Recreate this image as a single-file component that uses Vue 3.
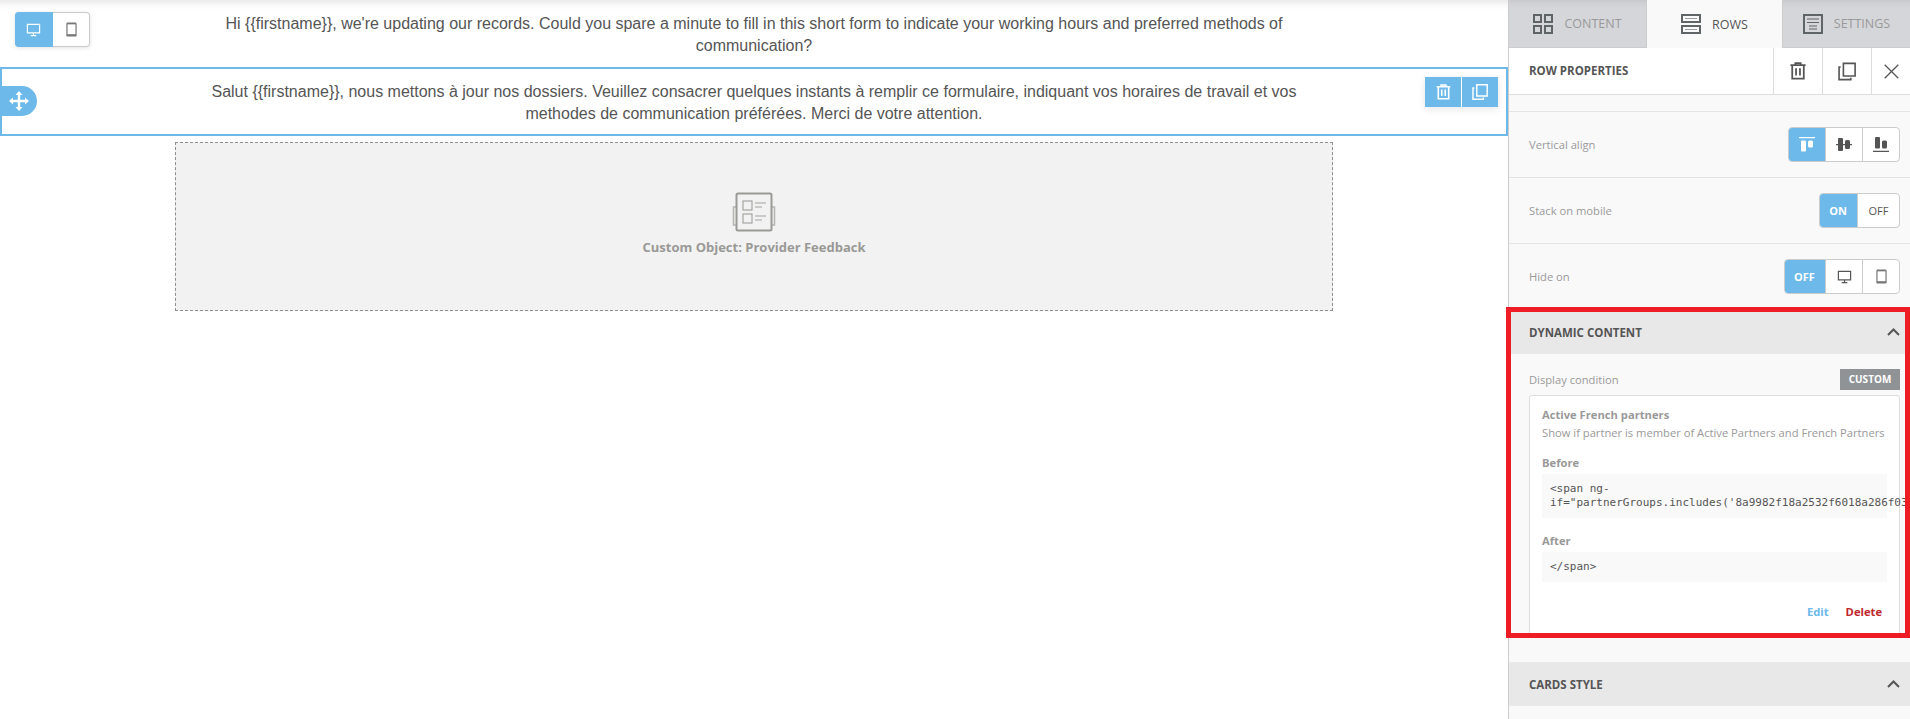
<script setup>
const tag = '{' + '{firstname}' + '}'
const codeBefore = `<span ng-if="partnerGroups.includes('8a9982f18a2532f6018a286f03`
</script>

<template>
  <div class="page">
    <svg class="defs" aria-hidden="true">
      <symbol id="desktop" viewBox="0 0 16 16">
        <path d="M1.5 2.5h13v9h-13zM8 11.5v2.5M5 14.5h6" fill="none" stroke="currentColor" stroke-width="1.3"/>
      </symbol>
      <symbol id="phone" viewBox="0 0 16 16">
        <rect x="2.500" y="0.500" width="11" height="15" rx="1.500" fill="currentColor"/>
        <rect x="3.800" y="2.500" width="8.400" height="10.500" fill="#fff"/>
      </symbol>
      <symbol id="trash" viewBox="0 0 18 20">
        <path d="M0.5 3.5h17M6 3V1.2h6V3M2.5 3.5v15h13v-15M6.8 7v8M11.2 7v8" fill="none" stroke="currentColor" stroke-width="2"/>
      </symbol>
      <symbol id="copy" viewBox="0 0 20 20">
        <path d="M6 1h13v14H6zM3 5H1.200v14h13v-2" fill="none" stroke="currentColor" stroke-width="1.800"/>
      </symbol>
    </svg>

    <main class="canvas">
      <div class="device-toggle">
        <button class="device active"><svg class="ico15"><use href="#desktop"/></svg></button>
        <button class="device"><svg class="ico15"><use href="#phone"/></svg></button>
      </div>

      <section class="text-row first">
        <p>Hi {{ tag }}, we're updating our records. Could you spare a minute to fill in this short form to indicate your working hours and preferred methods of communication?</p>
      </section>

      <section class="text-row selected">
        <div class="move-handle">
          <svg width="20" height="20" viewBox="0 0 20 20"><path d="M10 0l3.500 4h-2.300v4.800H16V6.500l4 3.500-4 3.500v-2.300h-4.800V16h2.300L10 20l-3.500-4h2.300v-4.800H4v2.300L0 10l4-3.500v2.300h4.800V4H6.500z" fill="#fff"/></svg>
        </div>
        <p>Salut {{ tag }}, nous mettons à jour nos dossiers. Veuillez consacrer quelques instants à remplir ce formulaire, indiquant vos horaires de travail et vos methodes de communication préférées. Merci de votre attention.</p>
        <div class="row-tools">
          <span class="tool"><svg width="15" height="16"><use href="#trash"/></svg></span>
          <span class="tool"><svg width="16" height="16"><use href="#copy"/></svg></span>
        </div>
      </section>

      <section class="placeholder">
        <svg width="44" height="40" viewBox="0 0 44 40" fill="none">
          <path d="M4 15H1.500v18H4M40 15h2.500v18H40" stroke="#b5b5b2" stroke-width="1.500"/>
          <rect x="4.500" y="1.500" width="35" height="37" rx="1.500" stroke="#999996" stroke-width="2"/>
          <rect x="11" y="9" width="9" height="9" stroke="#a5a5a2" stroke-width="1.200"/>
          <rect x="11" y="22" width="9" height="9" stroke="#a5a5a2" stroke-width="1.200"/>
          <path d="M23 11h11M23 15h7M23 24h11M23 28h7" stroke="#bdbdba" stroke-width="1.400"/>
        </svg>
        <span class="placeholder-label">Custom Object: Provider Feedback</span>
      </section>
    </main>

    <aside class="sidebar">
      <nav class="tabs">
        <div class="tab">
          <svg width="20" height="20" viewBox="0 0 20 20" fill="none" stroke="#5f6467" stroke-width="2"><rect x="1" y="1" width="7" height="7"/><rect x="12" y="1" width="7" height="7"/><rect x="1" y="12" width="7" height="7"/><rect x="12" y="12" width="7" height="7"/></svg>
          <span>CONTENT</span>
        </div>
        <div class="tab current">
          <svg width="20" height="20" viewBox="0 0 20 20" fill="none" stroke="#5f6467" stroke-width="2"><rect x="1" y="1" width="18" height="7"/><rect x="1" y="12" width="18" height="7"/><path d="M4 4.500h12M4 15.500h12" stroke-width="1" stroke="#9a9ea0"/></svg>
          <span>ROWS</span>
        </div>
        <div class="tab">
          <svg width="20" height="20" viewBox="0 0 20 20" fill="none" stroke="#5f6467"><rect x="1" y="1" width="18" height="18" stroke-width="2"/><path d="M4 5h12M4 8.500h12M6 12h8M6 15h8" stroke-width="1.200"/></svg>
          <span>SETTINGS</span>
        </div>
      </nav>

      <header class="props-head">
        <h2>ROW PROPERTIES</h2>
        <button class="head-btn"><svg width="16" height="18"><use href="#trash"/></svg></button>
        <button class="head-btn"><svg width="18" height="19"><use href="#copy"/></svg></button>
        <button class="head-btn last"><svg width="15" height="15" viewBox="0 0 15 15"><path d="M.7.700l13.600 13.600M14.300.700L.7 14.300" stroke="currentColor" stroke-width="1.300"/></svg></button>
      </header>
      <div class="band"></div>

      <div class="prop">
        <label>Vertical align</label>
        <div class="seg">
          <span class="cell on w37"><svg width="16" height="15" viewBox="0 0 16 15" fill="#fff"><path d="M0 0h16v1.200H0z"/><rect x="2" y="3.500" width="5" height="11" rx="1"/><rect x="9" y="3.500" width="5" height="7" rx="1.500"/></svg></span>
          <span class="cell w37"><svg width="16" height="15" viewBox="0 0 16 15" fill="#555"><path d="M0 7h16v1.200H0z"/><rect x="2" y="1" width="5" height="13" rx="1"/><rect x="9" y="3" width="5" height="9" rx="1.500"/></svg></span>
          <span class="cell w37"><svg width="16" height="15" viewBox="0 0 16 15" fill="#555"><path d="M0 13.800h16V15H0z"/><rect x="2" y="0" width="5" height="11.500" rx="1"/><rect x="9" y="3.500" width="5" height="8" rx="1.500"/></svg></span>
        </div>
      </div>

      <div class="prop">
        <label>Stack on mobile</label>
        <div class="seg">
          <span class="cell on w38">ON</span>
          <span class="cell w42">OFF</span>
        </div>
      </div>

      <div class="prop">
        <label>Hide on</label>
        <div class="seg">
          <span class="cell on w41">OFF</span>
          <span class="cell w37"><svg class="ico15 dark"><use href="#desktop"/></svg></span>
          <span class="cell w37"><svg class="ico15 grey"><use href="#phone"/></svg></span>
        </div>
      </div>

      <div class="section-head">
        <h3>DYNAMIC CONTENT</h3>
        <svg width="13" height="8" viewBox="0 0 13 8"><path d="M1 7l5.500-5.500L12 7" fill="none" stroke="#555" stroke-width="2"/></svg>
      </div>

      <div class="dynamic">
        <div class="cond-head">
          <span>Display condition</span>
          <span class="badge">CUSTOM</span>
        </div>
        <div class="card">
          <div class="card-title">Active French partners</div>
          <div class="card-desc">Show if partner is member of Active Partners and French Partners</div>
          <div class="code-label before">Before</div>
          <div class="code code-long">{{ codeBefore }}</div>
          <div class="code-label after">After</div>
          <div class="code code-short">&lt;/span&gt;</div>
          <div class="card-actions">
            <a class="edit">Edit</a>
            <a class="delete">Delete</a>
          </div>
        </div>
      </div>

      <div class="section-head">
        <h3>CARDS STYLE</h3>
        <svg width="13" height="8" viewBox="0 0 13 8"><path d="M1 7l5.500-5.500L12 7" fill="none" stroke="#555" stroke-width="2"/></svg>
      </div>
    </aside>

    <div class="annotation"></div>
  </div>
</template>

<style>
html, body { margin: 0; overflow: hidden; background: #fff; }
</style>

<style scoped>
.page {
  position: relative;
  display: flex;
  width: 1910px;
  height: 719px;
  overflow: hidden;
  font-family: "Open Sans", "Noto Sans", sans-serif;
  background: #fff;
}
.defs { position: absolute; width: 0; height: 0; }
.ico15 { width: 15px; height: 15px; }
.dark { color: #555; }
.grey { color: #777; }

/* canvas */
.canvas {
  position: relative;
  flex: 0 0 1508px;
  box-shadow: inset 0 10px 8px -8px rgba(0, 0, 0, .12);
  font-family: "Liberation Sans", Arial, sans-serif;
  color: #555;
}
.device-toggle {
  position: absolute;
  left: 15px;
  top: 12px;
  display: flex;
  height: 35px;
  width: 75px;
  border-radius: 4px;
  overflow: hidden;
  box-shadow: 0 0 0 1px #ccc inset, 0 1px 4px rgba(0,0,0,.12);
  background: #fff;
}
.device {
  flex: 1;
  border: 0;
  padding: 0;
  background: transparent;
  display: flex;
  align-items: center;
  justify-content: center;
  color: #777;
}
.device.active { background: #6cb9ea; color: #fff; }
.text-row { position: relative; box-sizing: border-box; }
.text-row p {
  width: 1090px;
  margin: 0 auto;
  text-align: center;
  font-size: 16px;
  line-height: 22px;
}
.first { height: 67px; padding-top: 13px; }
.selected {
  height: 69px;
  padding-top: 12px;
  border: 2px solid #6cb9ea;
}
.move-handle {
  position: absolute;
  left: -2px;
  top: 17px;
  width: 37px;
  height: 30px;
  padding-left: 9px;
  box-sizing: border-box;
  display: flex;
  align-items: center;
  background: #6cb9ea;
  border-radius: 0 15px 15px 0;
}
.row-tools {
  position: absolute;
  right: 8px;
  top: 8px;
  display: flex;
  gap: 1px;
  box-shadow: 0 2px 8px rgba(0,0,0,.1);
}
.tool {
  width: 36px;
  height: 30px;
  background: #6cb9ea;
  color: #fff;
  display: flex;
  align-items: center;
  justify-content: center;
}
.placeholder {
  width: 1158px;
  height: 169px;
  margin: 6px 0 0 175px;
  box-sizing: border-box;
  border: 1px dashed #8f8f8f;
  background: #f2f2f2;
  display: flex;
  flex-direction: column;
  align-items: center;
  padding-top: 49px;
}
.placeholder-label {
  margin-top: 6px;
  font: 700 13px "Open Sans", sans-serif;
  color: #999996;
}

/* sidebar */
.sidebar {
  flex: 1;
  min-width: 0;
  box-sizing: border-box;
  border-left: 1px solid #ccc;
  background: #f9f9f9;
  overflow: hidden;
  color: #555;
}
.tabs {
  display: flex;
  height: 48px;
  box-sizing: border-box;
  background: #d5d6da;
  border-bottom: 1px solid #ccc;
  box-shadow: inset 0 8px 8px -8px rgba(0,0,0,.12);
}
.tab {
  flex: 1;
  display: flex;
  align-items: center;
  justify-content: center;
  gap: 11px;
  font-size: 12.500px;
  color: #999;
}
.tab:nth-child(1) { flex: 0 0 137px; }
.tab:nth-child(2) { flex: 0 0 137px; }
.tab.current {
  background: #f9f9f9;
  color: #555;
  box-sizing: border-box;
  border-left: 1px solid #ccc;
  border-right: 1px solid #ccc;
  height: 48px;
}
.props-head {
  display: flex;
  align-items: stretch;
  height: 47px;
  box-sizing: border-box;
  background: #fff;
  border-bottom: 1px solid #ddd;
}
.props-head h2 {
  flex: 1;
  margin: 0;
  padding-left: 20px;
  font-size: 11.500px;
  font-weight: 700;
  line-height: 46px;
  color: #555;
}
.head-btn {
  flex: 0 0 49px;
  border: 0;
  border-left: 1px solid #ddd;
  background: transparent;
  padding: 0;
  color: #555;
  display: flex;
  align-items: center;
  justify-content: center;
}
.head-btn.last { flex-basis: 39px; }
.band { height: 17px; box-sizing: border-box; border-bottom: 1px solid #e4e4e4; }
.prop {
  height: 66px;
  box-sizing: border-box;
  padding: 0 10px 0 20px;
  display: flex;
  align-items: center;
  justify-content: space-between;
  border-bottom: 1px solid #e4e4e8;
}
.prop label { font-size: 11.200px; color: #999; }
.seg {
  display: flex;
  height: 35px;
  box-sizing: border-box;
  border-radius: 4px;
  overflow: hidden;
  background: #fff;
  border: 1px solid #ccc;
}
.cell {
  display: flex;
  align-items: center;
  justify-content: center;
  font-size: 11px;
  color: #555;
  box-sizing: border-box;
  border-left: 1px solid #ccc;
}
.cell:first-child { border-left: 0; }
.cell.on {
  background: #6cb9ea;
  color: #fff;
  font-weight: 700;
  margin: -1px 0 -1px -1px;
}
.w37 { width: 37px; }
.w38 { width: 38px; }
.w41 { width: 41px; }
.w42 { width: 42px; }
.section-head {
  height: 44px;
  padding: 0 10px 0 20px;
  box-sizing: border-box;
  display: flex;
  align-items: center;
  justify-content: space-between;
  background: #e8e8e8;
}
.section-head svg { margin-top: -1px; }
.section-head h3 { margin: 0; font-size: 11.500px; font-weight: 700; color: #555; }
.dynamic { height: 308px; box-sizing: border-box; padding: 15px 10px 0 20px; overflow: hidden; }
.cond-head {
  display: flex;
  justify-content: space-between;
  align-items: center;
  height: 21px;
  font-size: 11.200px;
  color: #999;
}
.badge {
  width: 60px;
  height: 21px;
  line-height: 21px;
  text-align: center;
  background: #8f9396;
  color: #fff;
  font-size: 10px;
  font-weight: 700;
}
.card {
  box-sizing: border-box;
  margin-top: 5px;
  height: 243px;
  padding: 10px 12px 0;
  background: #fff;
  border: 1px solid #ddd;
  border-radius: 3px;
  font-size: 11.200px;
  color: #999;
}
.card-title { font-weight: 700; line-height: 18px; }
.card-desc { line-height: 18px; white-space: nowrap; }
.code-label { font-weight: 700; line-height: 16px; }
.code-label.before { margin-top: 13px; }
.code-label.after { margin-top: 15px; }
.code {
  margin-top: 3px;
  box-sizing: border-box;
  width: 345px;
  background: #f9f9f9;
  font: 11px/14px "DejaVu Sans Mono", monospace;
  color: #555;
  white-space: pre-wrap;
}
.code-long { height: 44px; padding: 8px; }
.code-short { height: 30px; padding: 6px 8px; line-height: 18px; }
.card-actions {
  display: flex;
  justify-content: flex-end;
  gap: 17px;
  margin-top: 21px;
  padding-right: 5px;
  font-weight: 700;
  line-height: 18px;
}
.edit { color: #6cb9ea; }
.delete { color: #c0272d; }

.annotation {
  position: absolute;
  left: 1506px;
  top: 307px;
  width: 404px;
  height: 331px;
  box-sizing: border-box;
  border: 5px solid #ee1c25;
  pointer-events: none;
}
</style>
